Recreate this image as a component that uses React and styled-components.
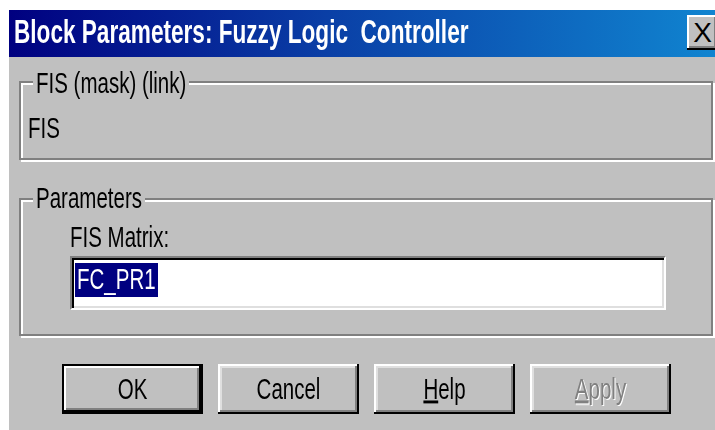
import React from "react";
import styled, { createGlobalStyle } from "styled-components";

const Global = createGlobalStyle`
  html, body { margin: 0; padding: 0; background: #ffffff; }
  body { font-family: "Liberation Sans", Arial, sans-serif; }
`;

const Window = styled.div`
  margin: 10px 0 0 9px;
  width: 706px;
  height: 420px;
  background: #c0c0c0;
  display: flex;
  flex-direction: column;
  overflow: hidden;
`;

const TitleBar = styled.div`
  height: 47px;
  flex: none;
  display: flex;
  align-items: center;
  justify-content: space-between;
  padding-left: 5px;
  background: linear-gradient(90deg, #000080 0%, #0a3fa6 45%, #1084d0 100%);
`;

const TitleText = styled.span`
  display: inline-block;
  color: #ffffff;
  font-weight: bold;
  font-size: 22.6px;
  line-height: 22.6px;
  white-space: pre;
  transform: scaleY(1.48);
`;

const CloseButton = styled.div`
  width: 31px;
  height: 35px;
  margin-right: -3px;
  margin-top: -2px;
  background: #c0c0c0;
  display: flex;
  align-items: center;
  justify-content: center;
  font-size: 28px;
  line-height: 1;
  color: #000;
  box-shadow: inset -2px -2px #000, inset 2px 2px #fff, inset -4px -4px #808080;
`;

const Text = styled.span`
  display: inline-block;
  font-size: 20.5px;
  line-height: 20.5px;
  white-space: pre;
  color: ${(p) => (p.$disabled ? "#808080" : "#000")};
  text-shadow: ${(p) => (p.$disabled ? "1px 1px #ffffff" : "none")};
  transform: scaleY(1.45);
`;

const Group = styled.div`
  position: relative;
  box-sizing: border-box;
  height: ${(p) => p.$h}px;
  margin: ${(p) => p.$top}px 2px 0 10px;
  border: 2px solid #808080;
  box-shadow: inset 2px 2px #ffffff, 2px 2px #ffffff;
  display: flex;
  flex-direction: column;
  align-items: flex-start;
  padding: ${(p) => p.$padTop}px 0 0 ${(p) => p.$padLeft}px;
`;

const Legend = styled.div`
  position: absolute;
  left: 12px;
  top: ${(p) => p.$top}px;
  padding: 0 3px;
  background: #c0c0c0;
`;

const Field = styled.div`
  box-sizing: border-box;
  width: 596px;
  height: 54px;
  margin-top: 8px;
  background: #ffffff;
  border-style: solid;
  border-width: 2px;
  border-color: #808080 #ffffff #ffffff #808080;
  box-shadow: inset 2px 2px #000000, inset -2px -2px #dfdfdf;
  padding: 5px 0 0 3px;
`;

const Selection = styled.span`
  display: inline-flex;
  align-items: center;
  height: 34px;
  padding: 0 2px;
  background: #000080;
  ${Text} { color: #ffffff; }
`;

const ButtonRow = styled.div`
  display: flex;
  gap: 15px;
  margin: 28px 0 0 53px;
`;

const Button = styled.div`
  box-sizing: border-box;
  width: 141px;
  height: 50px;
  display: flex;
  align-items: center;
  justify-content: center;
  background: #c0c0c0;
  box-shadow: ${(p) =>
    p.$default
      ? "inset 0 0 0 2px #000, inset -4px -4px #000, inset 4px 4px #fff, inset -6px -6px #808080"
      : "inset -2px -2px #000, inset 2px 2px #fff, inset -4px -4px #808080, inset 4px 4px #dfdfdf"};
`;

const Mnemonic = styled.span`
  text-decoration: underline;
  text-underline-offset: 1px;
`;

export default function App() {
  return (
    <>
      <Global />
      <Window>
        <TitleBar>
          <TitleText>{"Block Parameters: Fuzzy Logic  Controller"}</TitleText>
          <CloseButton>X</CloseButton>
        </TitleBar>

        <Group $top={24} $h={79} $padTop={35} $padLeft={7}>
          <Legend $top={-10}>
            <Text>FIS (mask) (link)</Text>
          </Legend>
          <Text>FIS</Text>
        </Group>

        <Group $top={38} $h={138} $padTop={27} $padLeft={49}>
          <Legend $top={-12}>
            <Text>Parameters</Text>
          </Legend>
          <Text>FIS Matrix:</Text>
          <Field>
            <Selection>
              <Text>FC_PR1</Text>
            </Selection>
          </Field>
        </Group>

        <ButtonRow>
          <Button $default>
            <Text>OK</Text>
          </Button>
          <Button>
            <Text>Cancel</Text>
          </Button>
          <Button>
            <Text>
              <Mnemonic>H</Mnemonic>elp
            </Text>
          </Button>
          <Button>
            <Text $disabled>
              <Mnemonic>A</Mnemonic>pply
            </Text>
          </Button>
        </ButtonRow>
      </Window>
    </>
  );
}
